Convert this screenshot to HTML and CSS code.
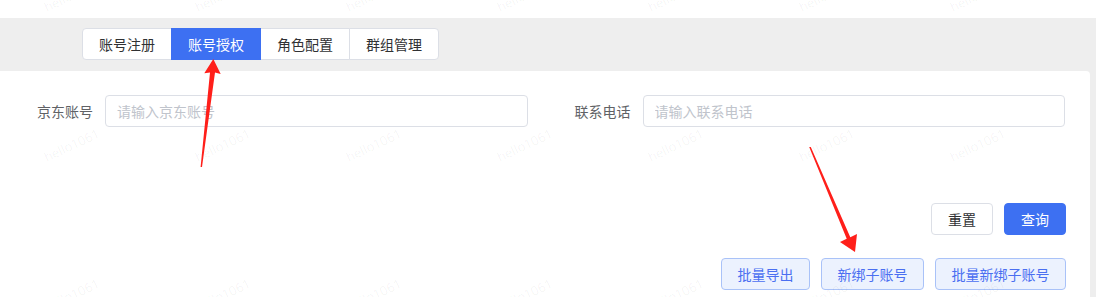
FILE: index.html
```html
<!DOCTYPE html>
<html lang="zh-CN">

<head>
    <meta charset="UTF-8">
    <title>账号授权</title>
    <link rel="stylesheet" href="styles.css">
</head>

<body>
    <div class="topbar"></div>

    <div class="main">
        <div class="tabs-bar">
            <div class="tabs">
                <span class="tab">账号注册</span>
                <span class="tab active">账号授权</span>
                <span class="tab">角色配置</span>
                <span class="tab">群组管理</span>
            </div>
        </div>

        <div class="card">
            <div class="form-row">
                <div class="form-item">
                    <label class="form-label">京东账号</label>
                    <input class="form-input" type="text" placeholder="请输入京东账号">
                </div>
                <div class="form-item">
                    <label class="form-label">联系电话</label>
                    <input class="form-input" type="text" placeholder="请输入联系电话">
                </div>
            </div>

            <div class="btn-row">
                <button class="btn">重置</button>
                <button class="btn btn-primary">查询</button>
            </div>

            <div class="btn-row btn-row-tools">
                <button class="btn btn-plain">批量导出</button>
                <button class="btn btn-plain">新绑子账号</button>
                <button class="btn btn-plain">批量新绑子账号</button>
            </div>
        </div>
    </div>

    <!-- watermark -->
    <div class="watermark">
        <div class="watermark-grid">
            <span>hello1061</span><span>hello1061</span><span>hello1061</span><span>hello1061</span>
            <span>hello1061</span><span>hello1061</span><span>hello1061</span><span>hello1061</span>
            <span>hello1061</span><span>hello1061</span><span>hello1061</span><span>hello1061</span>
            <span>hello1061</span><span>hello1061</span><span>hello1061</span><span>hello1061</span>
            <span>hello1061</span><span>hello1061</span><span>hello1061</span><span>hello1061</span>
            <span>hello1061</span><span>hello1061</span><span>hello1061</span><span>hello1061</span>
        </div>
    </div>

    <!-- annotation arrows -->
    <svg class="arrows" width="1096" height="297" viewBox="0 0 1096 297">
        <polygon fill="#ff1f1a" points="213.3,59 220.7,74 215,72.5 202,167 200.6,167 210,72.5 204.3,73.3" />
        <polygon fill="#ff1f1a" points="855,252 840,242 846.7,238.8 809.2,147 810.8,147 850.3,237.2 857,234" />
    </svg>
</body>

</html>
```

FILE: styles.css
```css
body {
    font-family: "Noto Sans CJK SC", "Noto Sans", sans-serif;
    font-size: 14px;
    margin: 0;
    background-color: #fff;
    color: #303133;
    height: 297px;
    overflow: hidden;
}

.topbar {
    height: 18px;
    background-color: #fff;
}

.main {
    background-color: #eee;
    height: 279px;
    display: flex;
    flex-direction: column;
}

.tabs-bar {
    padding: 10px 0 11px 82px;
}

.tabs {
    display: flex;
}

.tab {
    border: 1px solid #dcdfe6;
    margin-left: -1px;
    padding: 0 16px;
    line-height: 30px;
    background-color: #fff;
    color: #303133;
}

.tab:first-child {
    margin-left: 0;
    border-radius: 4px 0 0 4px;
}

.tab:last-child {
    border-radius: 0 4px 4px 0;
}

.tab.active {
    background-color: #3d70f2;
    border-color: #3d70f2;
    color: #fff;
    position: relative;
    z-index: 1;
}

.card {
    flex: 1;
    min-height: 0;
    background-color: #fff;
    margin-right: 6px;
    border-radius: 0 4px 0 0;
    padding: 24px 25px 0;
}

.form-row {
    display: grid;
    grid-template-columns: 1fr 1fr;
    column-gap: 35px;
}

.form-item {
    display: flex;
    align-items: center;
}

.form-label {
    width: 80px;
    flex: none;
    padding-right: 12px;
    box-sizing: border-box;
    text-align: right;
    color: #606266;
}

.form-input {
    flex: 1;
    min-width: 0;
    height: 32px;
    box-sizing: border-box;
    border: 1px solid #dcdfe6;
    border-radius: 4px;
    padding: 0 11px;
    font-family: inherit;
    font-size: 14px;
    color: #606266;
    outline: none;
}

.form-input::placeholder {
    color: #c0c4cc;
}

.btn-row {
    display: flex;
    justify-content: flex-end;
    gap: 11px;
    margin: 76px -1px 0 0;
}

.btn-row-tools {
    margin-top: 23px;
}

.btn {
    height: 32px;
    padding: 0 16px;
    border: 1px solid #dcdfe6;
    border-radius: 4px;
    background-color: #fff;
    color: #303133;
    font-family: inherit;
    font-size: 14px;
    cursor: pointer;
}

.btn-primary {
    background-color: #3d70f2;
    border-color: #3d70f2;
    color: #fff;
}

.btn-plain {
    padding: 0 15.5px;
    background-color: #ecf2fe;
    border-color: #a9c2f8;
    color: #4a6ff1;
}

.watermark {
    position: absolute;
    top: 0;
    left: 0;
    width: 1096px;
    height: 297px;
    overflow: hidden;
    pointer-events: none;
    z-index: 5;
}

.watermark-grid {
    display: grid;
    grid-template-columns: repeat(8, 151px);
    grid-auto-rows: 150px;
    margin: -80px 0 0 -4px;
}

.watermark-grid span {
    display: flex;
    align-items: center;
    justify-content: center;
    font-family: "Open Sans", sans-serif;
    font-size: 13px;
    color: rgba(0, 0, 0, 0.05);
    transform: rotate(-25deg);
}

.arrows {
    position: absolute;
    top: 0;
    left: 0;
    pointer-events: none;
    z-index: 6;
}
```
